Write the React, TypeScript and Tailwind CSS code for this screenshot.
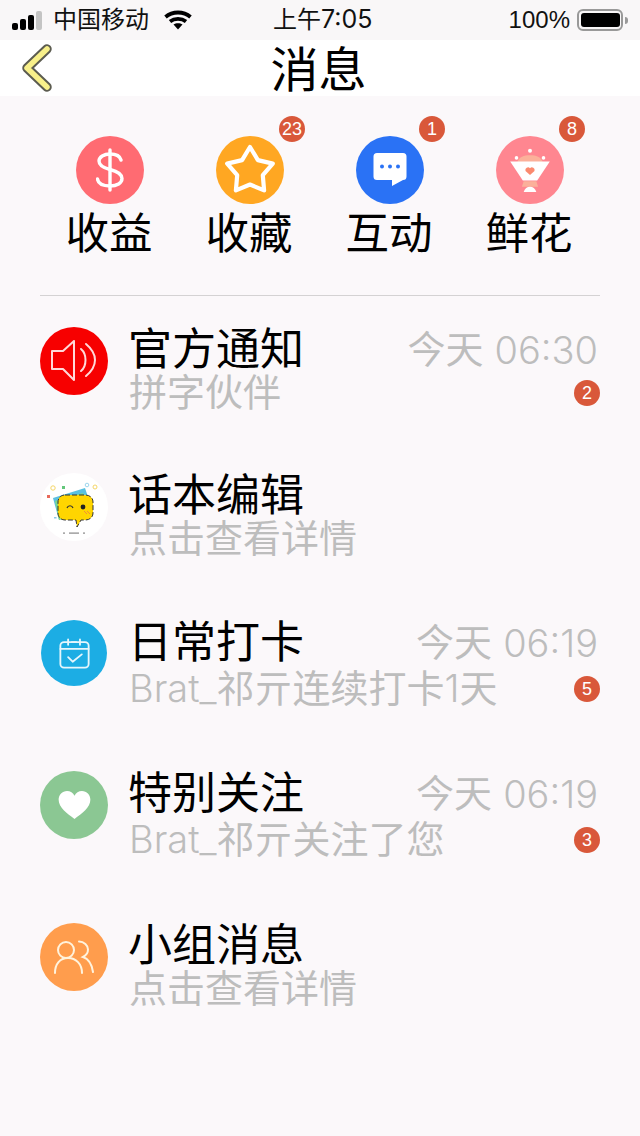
import type { ReactNode } from "react";

const font = "font-['Liberation_Sans','Noto_Sans_CJK_SC',sans-serif]";

function Badge({ n, className = "" }: { n: number; className?: string }) {
  return (
    <span className={`flex h-[26px] w-[26px] items-center justify-center rounded-full bg-[#d9583a] text-[18px] leading-none text-white ${className}`}>
      {n}
    </span>
  );
}

function Circle({ color, size = "h-[68px] w-[68px]", children }: { color: string; size?: string; children: ReactNode }) {
  return <div className={`flex shrink-0 items-center justify-center rounded-full ${size} ${color}`}>{children}</div>;
}

function Latin({ children }: { children: ReactNode }) {
  return <span className="font-['Inter'] text-[38px] font-light">{children}</span>;
}

const DollarIcon = (
  <svg width="28" height="44" viewBox="0 0 28 44" fill="none" stroke="#fff" strokeWidth="3.400" strokeLinecap="round">
    <path d="M25 12c-1-4-5-6-11-6S3 9 3 13c0 5 5 7 11 8.500s12 3.500 12 9c0 4.500-5 7.500-12 7.500S2 36 1.500 31" />
    <path d="M14 2v40" />
  </svg>
);

const StarIcon = (
  <svg width="56" height="56" viewBox="0 0 56 56" fill="none" stroke="#fff" strokeWidth="4.200" strokeLinejoin="round">
    <path d="M28 5L35.900 18.100 50.800 21.600 40.800 33.200 42.100 48.400 28 42.500 13.900 48.400 15.200 33.200 5.200 21.600 20.100 18.100z" />
  </svg>
);

const ChatIcon = (
  <svg width="34" height="36" viewBox="0 0 34 36">
    <path fill="#fff" d="M4 1h26a3.500 3.500 0 0 1 3.500 3.500v20a3.500 3.500 0 0 1-3.500 3.500L19 34v-6H4a3.500 3.500 0 0 1-3.500-3.500v-20A3.500 3.500 0 0 1 4 1z" />
    <circle cx="9" cy="14.500" r="2" fill="#2a72f5" />
    <circle cx="17" cy="14.500" r="2" fill="#2a72f5" />
    <circle cx="25" cy="14.500" r="2" fill="#2a72f5" />
  </svg>
);

const FlowerIcon = (
  <svg width="40" height="45" viewBox="0 0 44 50">
    <path fill="#fbb09a" d="M8 15c2-5 7-7 14-7s12 2 14 7l-2 3H10z" />
    <circle cx="22" cy="3" r="2.200" fill="#fff" />
    <circle cx="7" cy="11" r="2" fill="#fff" />
    <circle cx="37" cy="11" r="2" fill="#fff" />
    <path fill="#fff" d="M0 15h44l-14 21H14z" />
    <path fill="#fb8a6f" d="M22 30l-5-4.500a3 3 0 0 1 5-3 3 3 0 0 1 5 3z" />
    <path fill="#fbb09a" d="M15 37h14l2 6H13z" />
    <path fill="#fff" d="M15 49c1-4 4-6 7-6s6 2 7 6z" />
  </svg>
);

const SpeakerIcon = (
  <svg width="46" height="42" viewBox="0 0 46 42" fill="none" stroke="#ffd9d9" strokeWidth="2" strokeLinejoin="round" strokeLinecap="round">
    <path d="M1 11h11L23 1v39L12 29H1z" />
    <path d="M30 9C36 14 36 26 30 31" />
    <path d="M35 4C47 14 47 26 35 36" />
  </svg>
);

// 话本编辑的头像是一张小插画,这里只画大致形状
const MascotIcon = (
  <svg width="56" height="60" viewBox="0 0 56 60">
    <path fill="#5ac0e0" d="M7 21l32-10 4 12-30 20z" />
    <path fill="#7ed68a" d="M9 24l28-8 6 20-30 7z" />
    <path fill="#ffd500" stroke="#333" strokeWidth="1" strokeDasharray="5 2" d="M19 18h20c5 0 8 3 8 7v11c0 4-3 7-8 7h-4l-4 7-1-7H19c-4 0-7-3-7-7V25c0-4 3-7 7-7z" />
    <path fill="none" stroke="#333" strokeWidth="1.200" d="M21 31c1-3 5-3 6 0" />
    <circle cx="37" cy="30" r="2.400" fill="#222" />
    <path stroke="#f08a3c" strokeWidth="1" d="M38 34l3 3M41 34l3 3" />
    <rect x="1" y="18" width="3" height="3" fill="#e8695a" />
    <rect x="16" y="9" width="3" height="3" fill="#63c77a" />
    <circle cx="7" cy="11" r="2.200" fill="none" stroke="#f5d668" />
    <circle cx="49" cy="10" r="2" fill="none" stroke="#f5d668" />
    <circle cx="41" cy="8" r="1.800" fill="none" stroke="#9dd7ee" />
    <rect x="8" y="40" width="2.500" height="1.500" fill="#8cc8e8" />
    <rect x="23" y="55.500" width="10" height="1.200" fill="#888" />
    <rect x="17" y="55.500" width="2" height="1.200" fill="#888" />
    <rect x="37" y="55.500" width="2" height="1.200" fill="#888" />
  </svg>
);

const CalendarIcon = (
  <svg width="31" height="31" viewBox="0 0 34 34" fill="none" stroke="#e6f6fc" strokeWidth="2" strokeLinecap="round" strokeLinejoin="round">
    <rect x="1.500" y="4.500" width="31" height="28" rx="4" />
    <path d="M1.500 12h31M10 1.500v6M23 1.500v6M14 4.500h5" />
    <path d="M10 21l5 5 10-8" />
  </svg>
);

const HeartIcon = (
  <svg width="33" height="28" viewBox="0 0 34 30">
    <path fill="#fff" d="M17 30C9 24 0 18 0 9.500 0 4 4 0 9 0c3.500 0 6.500 2 8 5 1.500-3 4.500-5 8-5 5 0 9 4 9 9.500C34 18 25 24 17 30z" />
  </svg>
);

const GroupIcon = (
  <svg width="40" height="34" viewBox="0 0 40 34" fill="none" stroke="#fff3dd" strokeWidth="2" strokeLinecap="round">
    <circle cx="12" cy="10" r="8" />
    <path d="M1 33c0-9 5-15 13-15s14 6 14 15" />
    <path d="M25 1.500c5 0 9 4 9 8s-2 6-5 7.500c6 2 9 8 10 15" />
  </svg>
);

const shortcuts = [
  { label: "收益", color: "bg-[#ff6b72]", icon: DollarIcon },
  { label: "收藏", color: "bg-[#ffa722]", icon: StarIcon, badge: 23 },
  { label: "互动", color: "bg-[#2a72f5]", icon: ChatIcon, badge: 1 },
  { label: "鲜花", color: "bg-[#ff8690]", icon: FlowerIcon, badge: 8 },
];

const rows = [
  { title: "官方通知", sub: "拼字伙伴", day: "今天", clock: "06:30", badge: 2, color: "bg-[#f70000]", icon: SpeakerIcon, height: "h-[146px]", gap: "-mt-[4px]" },
  { title: "话本编辑", sub: "点击查看详情", color: "bg-white", icon: MascotIcon, height: "h-[147px]", gap: "-mt-[4px]" },
  { title: "日常打卡", sub: <><Latin>Brat_</Latin>祁亓连续打卡<Latin>1</Latin>天</>, day: "今天", clock: "06:19", badge: 5, color: "bg-[#1cade4]", size: "mx-[1px] h-[66px] w-[66px]", icon: CalendarIcon, height: "h-[151px]", gap: "-mt-[2px]" },
  { title: "特别关注", sub: <><Latin>Brat_</Latin>祁亓关注了您</>, day: "今天", clock: "06:19", badge: 3, color: "bg-[#8bc793]", icon: HeartIcon, height: "h-[152px]", gap: "-mt-[2px]" },
  { title: "小组消息", sub: "点击查看详情", color: "bg-[#ff9d4d]", icon: GroupIcon, height: "h-[100px]", gap: "-mt-[4px]" },
];

export default function App() {
  return (
    <div className={`flex h-[1136px] w-[640px] flex-col overflow-hidden bg-[#fbf8fa] text-black ${font}`}>
      {/* status bar */}
      <div className="relative flex h-10 items-center justify-between bg-[#f9f7f8] pl-3 pr-3 text-[24px] text-[#111]">
        <div className="flex items-center">
          <div className="flex items-end gap-[2px]">
            <span className="h-[7px] w-[6px] rounded-[2px] bg-black" />
            <span className="h-[11px] w-[6px] rounded-[2px] bg-black" />
            <span className="h-[15px] w-[6px] rounded-[2px] bg-black" />
            <span className="h-[19px] w-[6px] rounded-[2px] bg-[#c4c4c4]" />
          </div>
          <span className="ml-[11px]">中国移动</span>
          <svg className="ml-[15px]" width="28" height="20" viewBox="0 0 28 20" fill="none" stroke="#000" strokeWidth="3.800">
            <path d="M1.500 7c7-6 18-6 25 0" />
            <path d="M6 11.500c4.500-3.500 11.500-3.500 16 0" />
            <path fill="#000" stroke="none" d="M9.500 14.500c2.500-1.800 6.500-1.800 9 0L14 19.500z" />
          </svg>
        </div>
        <span className="absolute left-[273px] top-1/2 -translate-y-1/2">
          上午<span className="font-['Inter'] text-[25px]">7:05</span>
        </span>
        <div className="flex items-center">
          <span>100%</span>
          <div className="ml-[7px] flex h-[22px] w-[46px] items-center justify-center rounded-[6px] border-2 border-[#999]">
            <div className="h-[14px] w-[39px] rounded-[3px] bg-black" />
          </div>
          <span className="ml-[2px] h-[7px] w-[3px] rounded-r-sm bg-[#999]" />
        </div>
      </div>

      {/* nav bar */}
      <div className="relative flex h-14 items-center justify-center bg-white">
        <svg className="absolute left-[20px] top-[3px]" width="34" height="50" viewBox="0 0 34 50" fill="none" strokeLinecap="round" strokeLinejoin="round">
          <path d="M27 6L7 25l20 19" stroke="#5c5c50" strokeWidth="9.500" />
          <path d="M27 6L7 25l20 19" stroke="#f8f08a" strokeWidth="5.500" />
        </svg>
        <span className="mr-[3px] mt-[6px] text-[48px] leading-none">消息</span>
      </div>

      {/* shortcuts */}
      <div className="mx-10 flex justify-between border-b border-[#d4d2d3] px-[27px] pb-[35px] pt-[40px]">
        {shortcuts.map((s) => (
          <div key={s.label} className="flex w-[86px] flex-col items-center">
            <div className="relative">
              <Circle color={s.color}>{s.icon}</Circle>
              {s.badge !== undefined && <Badge n={s.badge} className="absolute -top-[20px] left-[63px]" />}
            </div>
            <span className="mr-[2px] mt-[4px] text-[43.500px] leading-[52px] whitespace-nowrap">{s.label}</span>
          </div>
        ))}
      </div>

      {/* message list */}
      <div className="mx-10 pt-[31px]">
        {rows.map((r) => (
          <div key={r.title} className={`flex ${r.height}`}>
            <Circle color={r.color} size={r.size}>{r.icon}</Circle>
            <div className="ml-[20px] flex-1">
              <div className="-mt-[2px] flex items-center justify-between">
                <span className="text-[44px] leading-[50px]">{r.title}</span>
                {r.clock && (
                  <span className="flex items-center gap-[11px] pr-[2px] text-[38px] leading-[50px] text-[#bdbdbd]">
                    {r.day}
                    <span className="font-['Inter'] font-light">{r.clock}</span>
                  </span>
                )}
              </div>
              <div className={`flex items-center justify-between ${r.gap}`}>
                <span className="pl-[1px] text-[38px] leading-[44px] whitespace-nowrap text-[#bdbdbd]">{r.sub}</span>
                {r.badge !== undefined && <Badge n={r.badge} />}
              </div>
            </div>
          </div>
        ))}
      </div>
    </div>
  );
}
